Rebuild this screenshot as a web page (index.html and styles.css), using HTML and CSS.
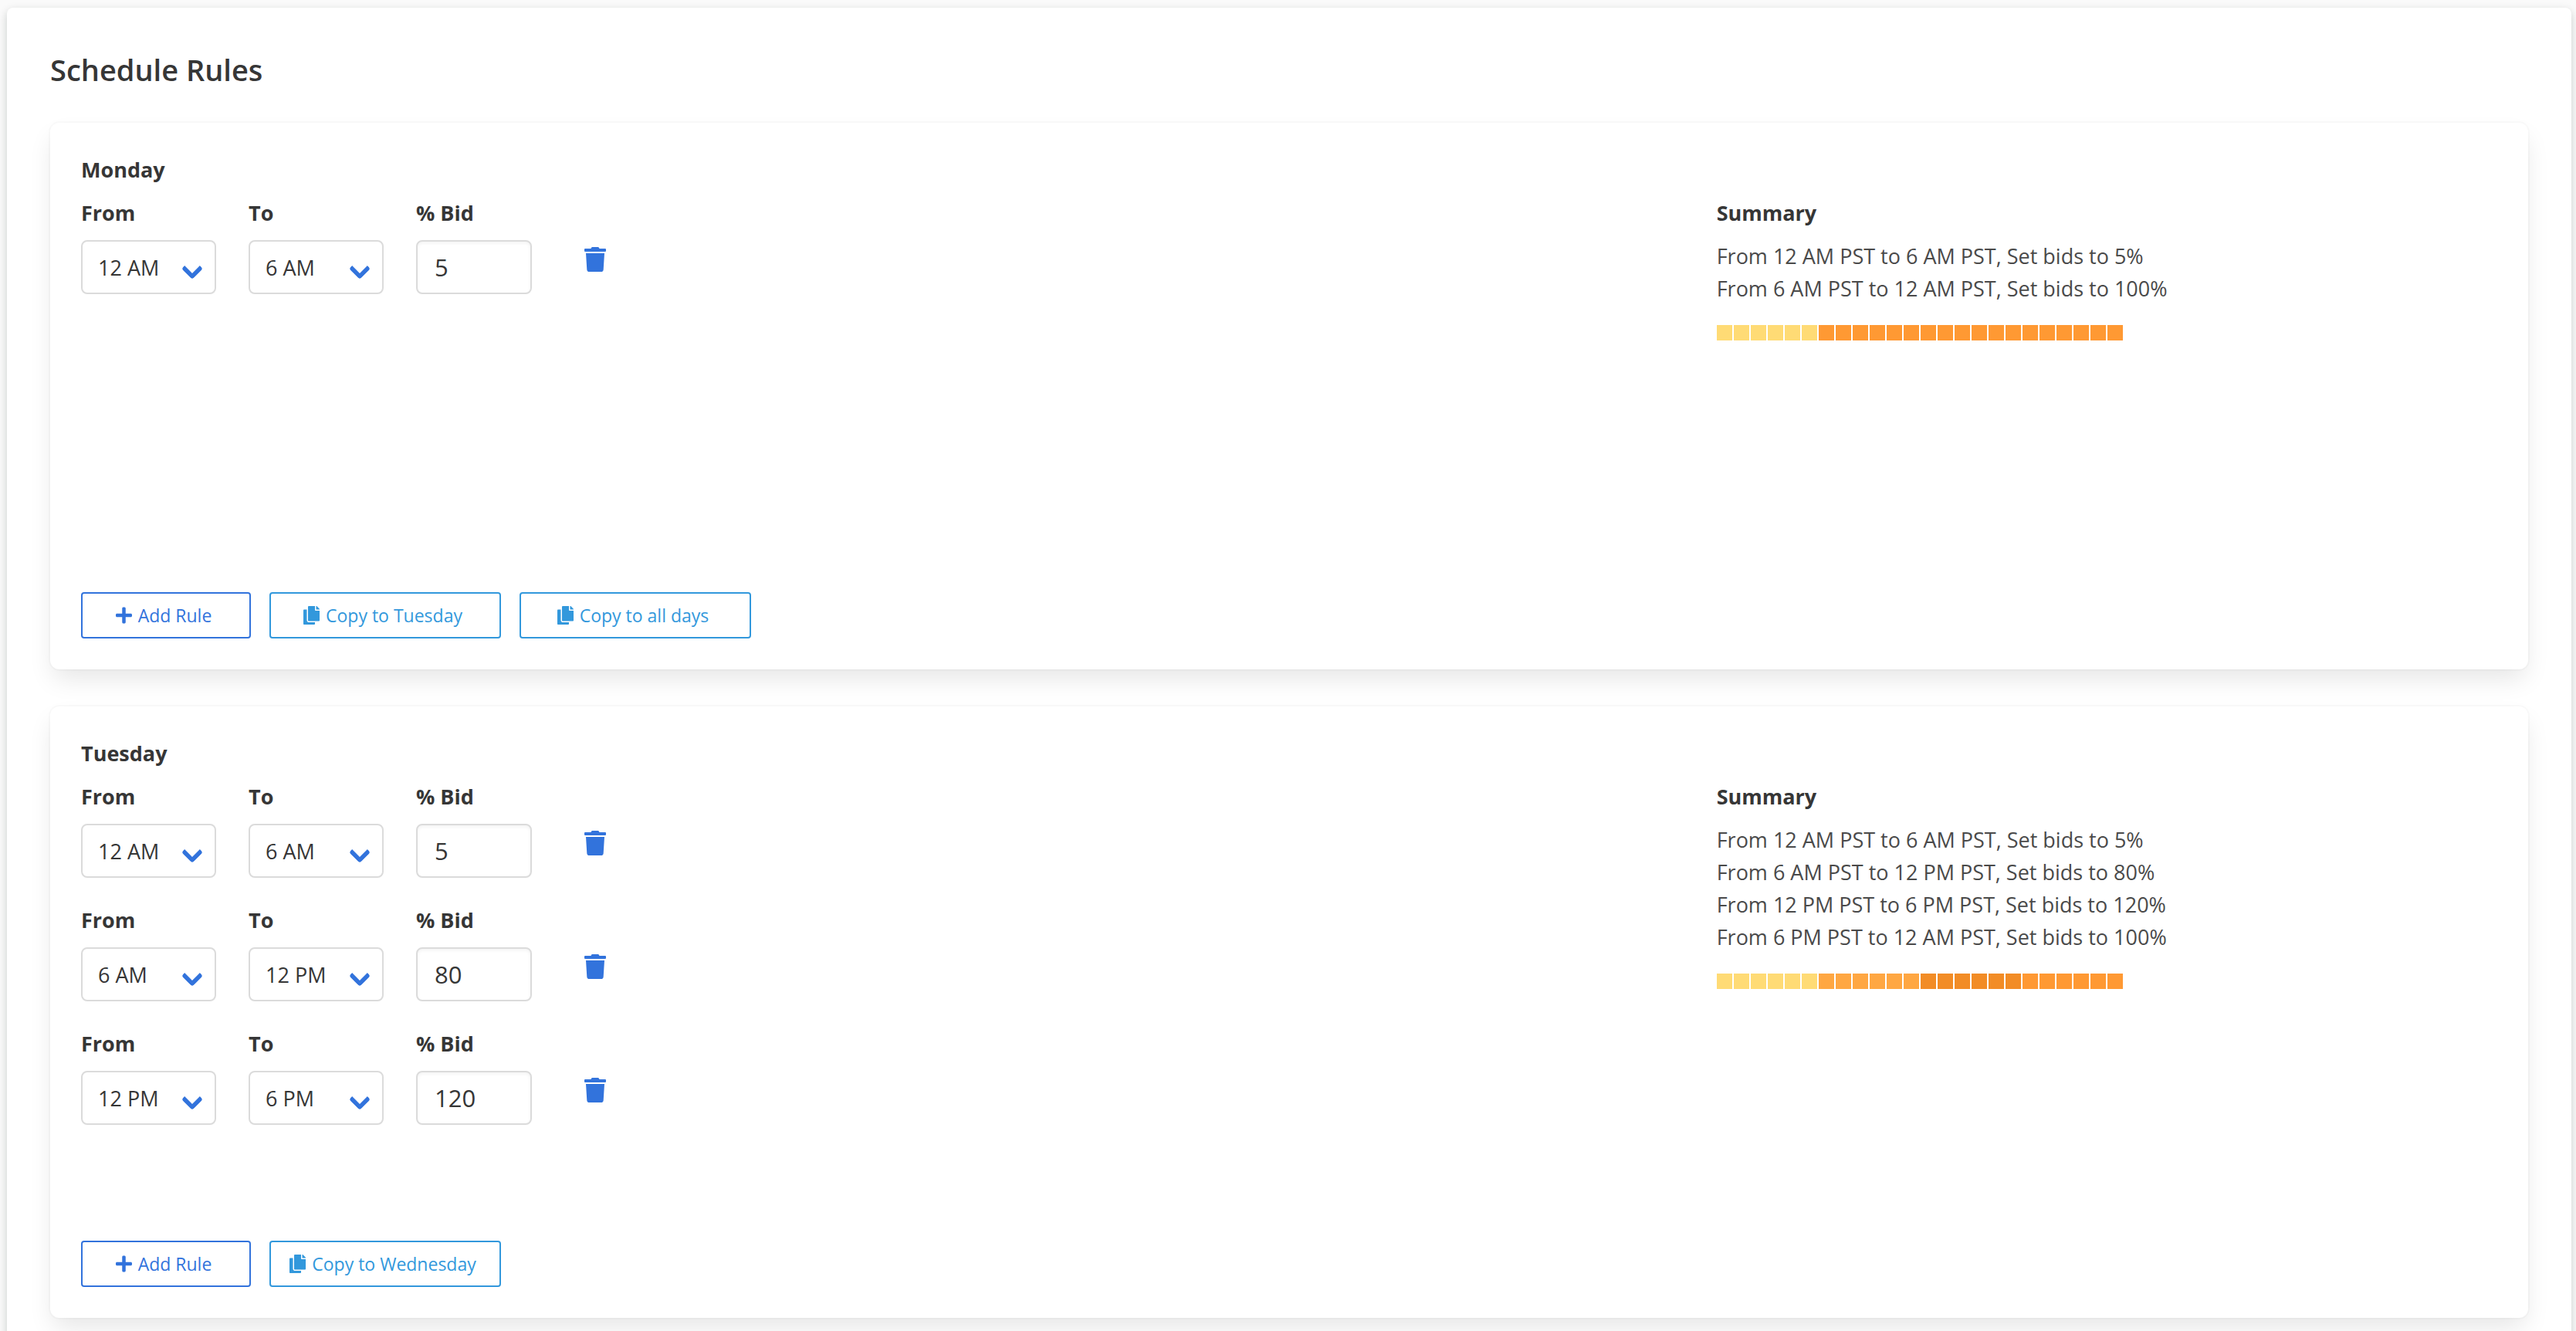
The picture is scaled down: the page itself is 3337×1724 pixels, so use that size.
FILE: index.html
```html
<!DOCTYPE html>
<html lang="en">
<head>
    <meta charset="UTF-8">
    <title>Schedule Rules</title>
    <link rel="stylesheet" href="styles.css">
</head>
<body>
    <svg class="sprite" aria-hidden="true">
        <symbol id="icon-trash" viewBox="0 0 448 512">
            <path d="M432 32H312l-9.400-18.700A24 24 0 0 0 281.100 0H166.800a23.720 23.720 0 0 0-21.400 13.300L136 32H16A16 16 0 0 0 0 48v32a16 16 0 0 0 16 16h416a16 16 0 0 0 16-16V48a16 16 0 0 0-16-16zM53.200 467a48 48 0 0 0 47.900 45h245.800a48 48 0 0 0 47.900-45L416 128H32z"/>
        </symbol>
        <symbol id="icon-plus" viewBox="0 0 448 512">
            <path d="M416 208H272V64c0-17.670-14.330-32-32-32h-32c-17.670 0-32 14.330-32 32v144H32c-17.670 0-32 14.330-32 32v32c0 17.670 14.330 32 32 32h144v144c0 17.670 14.330 32 32 32h32c17.670 0 32-14.330 32-32V304h144c17.670 0 32-14.330 32-32v-32c0-17.670-14.330-32-32-32z"/>
        </symbol>
        <symbol id="icon-copy" viewBox="0 0 448 512">
            <path d="M320 448v40c0 13.255-10.745 24-24 24H24c-13.255 0-24-10.745-24-24V120c0-13.255 10.745-24 24-24h72v296c0 30.879 25.121 56 56 56h168zm0-344V0H152c-13.255 0-24 10.745-24 24v368c0 13.255 10.745 24 24 24h272c13.255 0 24-10.745 24-24V128H344c-13.200 0-24-10.800-24-24zm120.971-31.029L375.029 7.029A24 24 0 0 0 358.059 0H352v96h96v-6.059a24 24 0 0 0-7.029-16.970z"/>
        </symbol>
    </svg>

    <main class="panel">
        <h1 class="title">Schedule Rules</h1>

        <section class="day">
            <h2 class="label">Monday</h2>
            <div class="columns">
                <div class="rules">
                    <div class="rule">
                        <div class="field">
                            <label class="label" for="mon-from-1">From</label>
                            <div class="select">
                                <select id="mon-from-1"><option selected>12 AM</option><option>6 AM</option><option>12 PM</option><option>6 PM</option></select>
                            </div>
                        </div>
                        <div class="field">
                            <label class="label" for="mon-to-1">To</label>
                            <div class="select">
                                <select id="mon-to-1"><option>12 AM</option><option selected>6 AM</option><option>12 PM</option><option>6 PM</option></select>
                            </div>
                        </div>
                        <div class="field">
                            <label class="label" for="mon-bid-1">% Bid</label>
                            <input class="input" id="mon-bid-1" type="text" value="5">
                        </div>
                        <button class="delete" type="button" aria-label="Delete rule"><svg><use href="#icon-trash"/></svg></button>
                    </div>
                </div>
                <div class="summary">
                    <h3 class="label">Summary</h3>
                    <p>From 12 AM PST to 6 AM PST, Set bids to 5%</p>
                    <p>From 6 AM PST to 12 AM PST, Set bids to 100%</p>
                    <div class="hours">
                        <span class="low"></span><span class="low"></span><span class="low"></span><span class="low"></span><span class="low"></span><span class="low"></span>
                        <span></span><span></span><span></span><span></span><span></span><span></span>
                        <span></span><span></span><span></span><span></span><span></span><span></span>
                        <span></span><span></span><span></span><span></span><span></span><span></span>
                    </div>
                </div>
            </div>
            <div class="buttons">
                <button class="button add" type="button"><svg><use href="#icon-plus"/></svg>Add Rule</button>
                <button class="button copy" type="button"><svg><use href="#icon-copy"/></svg>Copy to Tuesday</button>
                <button class="button copy" type="button"><svg><use href="#icon-copy"/></svg>Copy to all days</button>
            </div>
        </section>

        <section class="day">
            <h2 class="label">Tuesday</h2>
            <div class="columns">
                <div class="rules">
                    <div class="rule">
                        <div class="field">
                            <label class="label" for="tue-from-1">From</label>
                            <div class="select">
                                <select id="tue-from-1"><option selected>12 AM</option><option>6 AM</option><option>12 PM</option><option>6 PM</option></select>
                            </div>
                        </div>
                        <div class="field">
                            <label class="label" for="tue-to-1">To</label>
                            <div class="select">
                                <select id="tue-to-1"><option>12 AM</option><option selected>6 AM</option><option>12 PM</option><option>6 PM</option></select>
                            </div>
                        </div>
                        <div class="field">
                            <label class="label" for="tue-bid-1">% Bid</label>
                            <input class="input" id="tue-bid-1" type="text" value="5">
                        </div>
                        <button class="delete" type="button" aria-label="Delete rule"><svg><use href="#icon-trash"/></svg></button>
                    </div>
                    <div class="rule">
                        <div class="field">
                            <label class="label" for="tue-from-2">From</label>
                            <div class="select">
                                <select id="tue-from-2"><option>12 AM</option><option selected>6 AM</option><option>12 PM</option><option>6 PM</option></select>
                            </div>
                        </div>
                        <div class="field">
                            <label class="label" for="tue-to-2">To</label>
                            <div class="select">
                                <select id="tue-to-2"><option>12 AM</option><option>6 AM</option><option selected>12 PM</option><option>6 PM</option></select>
                            </div>
                        </div>
                        <div class="field">
                            <label class="label" for="tue-bid-2">% Bid</label>
                            <input class="input" id="tue-bid-2" type="text" value="80">
                        </div>
                        <button class="delete" type="button" aria-label="Delete rule"><svg><use href="#icon-trash"/></svg></button>
                    </div>
                    <div class="rule">
                        <div class="field">
                            <label class="label" for="tue-from-3">From</label>
                            <div class="select">
                                <select id="tue-from-3"><option>12 AM</option><option>6 AM</option><option selected>12 PM</option><option>6 PM</option></select>
                            </div>
                        </div>
                        <div class="field">
                            <label class="label" for="tue-to-3">To</label>
                            <div class="select">
                                <select id="tue-to-3"><option>12 AM</option><option>6 AM</option><option>12 PM</option><option selected>6 PM</option></select>
                            </div>
                        </div>
                        <div class="field">
                            <label class="label" for="tue-bid-3">% Bid</label>
                            <input class="input" id="tue-bid-3" type="text" value="120">
                        </div>
                        <button class="delete" type="button" aria-label="Delete rule"><svg><use href="#icon-trash"/></svg></button>
                    </div>
                </div>
                <div class="summary">
                    <h3 class="label">Summary</h3>
                    <p>From 12 AM PST to 6 AM PST, Set bids to 5%</p>
                    <p>From 6 AM PST to 12 PM PST, Set bids to 80%</p>
                    <p>From 12 PM PST to 6 PM PST, Set bids to 120%</p>
                    <p>From 6 PM PST to 12 AM PST, Set bids to 100%</p>
                    <div class="hours">
                        <span class="low"></span><span class="low"></span><span class="low"></span><span class="low"></span><span class="low"></span><span class="low"></span>
                        <span class="mid"></span><span class="mid"></span><span class="mid"></span><span class="mid"></span><span class="mid"></span><span class="mid"></span>
                        <span class="high"></span><span class="high"></span><span class="high"></span><span class="high"></span><span class="high"></span><span class="high"></span>
                        <span></span><span></span><span></span><span></span><span></span><span></span>
                    </div>
                </div>
            </div>
            <div class="buttons">
                <button class="button add" type="button"><svg><use href="#icon-plus"/></svg>Add Rule</button>
                <button class="button copy" type="button"><svg><use href="#icon-copy"/></svg>Copy to Wednesday</button>
            </div>
        </section>
    </main>
</body>
</html>
```
FILE: styles.css
```css
*, *::after {
    box-sizing: border-box;
}

body {
    margin: 0;
    padding: 10px 6px 0 9px;
    background-color: #fafafa;
    color: #4a4a4a;
    font-family: "Open Sans", "Noto Sans", sans-serif;
    font-size: 27px;
    line-height: 42px;
}

h1, h2, h3, p {
    margin: 0;
}

button, input, select {
    font-family: inherit;
}

.sprite {
    display: none;
}

.panel {
    padding: 50px 56px 40px;
    background-color: #fff;
    border-radius: 8px;
    box-shadow: 0 4px 12px rgba(10, 30, 20, 0.2);
}

.title {
    margin-bottom: 39px;
    color: #363636;
    font-size: 38px;
    font-weight: 600;
    line-height: 60px;
}

.day {
    margin-bottom: 48px;
    padding: 40px;
    background-color: #fff;
    border-radius: 12px;
    box-shadow: 0 16px 32px -4px rgba(10, 10, 10, 0.1), 0 0 0 2px rgba(10, 10, 10, 0.02);
}

.day:last-child {
    margin-bottom: 0;
}

.label {
    display: block;
    margin-bottom: 14px;
    color: #363636;
    font-size: 27px;
    font-weight: 700;
}

.columns {
    display: grid;
    grid-template-columns: 2fr 1fr;
    margin: 0 -24px;
}

.rules,
.summary {
    padding: 0 24px;
}

.rule {
    display: flex;
    margin-bottom: 34px;
}

.field {
    margin-right: 42px;
}

.select {
    position: relative;
    width: 175px;
}

.select select {
    appearance: none;
    display: block;
    width: 100%;
    height: 70px;
    padding: 0 20px;
    background-color: #fff;
    border: 2px solid #dbdbdb;
    border-radius: 8px;
    color: #363636;
    font-size: 27px;
}

/* drop-down arrow */
.select::after {
    content: "";
    position: absolute;
    top: 27px;
    right: 21px;
    width: 20px;
    height: 20px;
    border: 6px solid #3273dc;
    border-top: 0;
    border-right: 0;
    border-radius: 4px;
    transform: rotate(-45deg);
    pointer-events: none;
}

.input {
    display: block;
    width: 150px;
    height: 70px;
    padding: 0 22px;
    background-color: #fff;
    border: 2px solid #dbdbdb;
    border-radius: 8px;
    box-shadow: inset 0 2px 4px rgba(10, 10, 10, 0.05);
    color: #363636;
    font-size: 31px;
}

.delete {
    align-self: flex-start;
    margin: 65px 0 0 26px;
    padding: 0;
    background: none;
    border: 0;
    cursor: pointer;
}

.delete svg {
    display: block;
    width: 28px;
    height: 32px;
    fill: #3273dc;
}

.hours {
    display: flex;
    gap: 2px;
    height: 346px;
    margin-top: 26px;
}

.hours span {
    width: 20px;
    height: 20px;
    background-color: #ff9933;
}

.hours .low {
    background-color: #ffdb75;
}

.hours .mid {
    background-color: #ffa742;
}

.hours .high {
    background-color: #f28c26;
}

.buttons {
    display: flex;
    gap: 24px;
}

.button {
    display: flex;
    align-items: center;
    justify-content: center;
    gap: 8px;
    height: 60px;
    padding: 0 6px 0 0;
    background-color: #fff;
    border: 2px solid;
    border-radius: 4px;
    font-size: 23px;
    cursor: pointer;
}

.button svg {
    width: 21px;
    height: 24px;
    fill: currentColor;
}

.add {
    width: 220px;
    color: #3273dc;
}

.copy {
    width: 300px;
    color: #3298dc;
}
```
